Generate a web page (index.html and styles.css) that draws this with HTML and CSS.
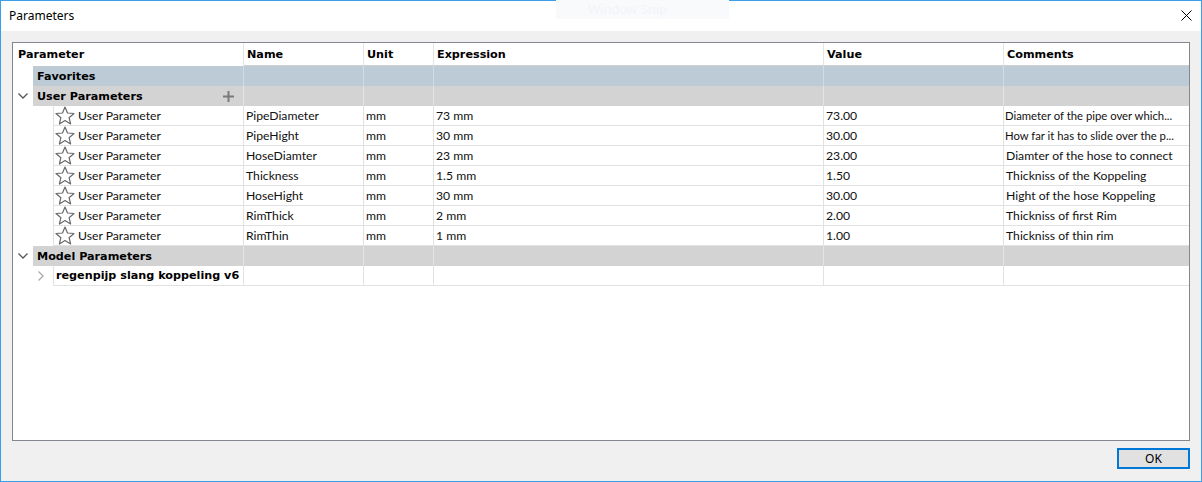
FILE: index.html
```html
<!DOCTYPE html>
<html>
<head>
<meta charset="utf-8">
<link rel="stylesheet" href="styles.css">
</head>
<body>
<div class="window">
  <div class="titlebar">
    <span class="title">Parameters</span>
    <span class="snip">Window Snip</span>
    <svg class="close" width="11" height="11" viewBox="0 0 11 11"><path d="M0.5 0.5 L10.5 10.5 M10.5 0.5 L0.5 10.5" stroke="#000" stroke-width="1" fill="none"/></svg>
  </div>
  <div class="content">
    <div class="grid">
      <div class="row head">
        <div class="c h first">Parameter</div>
        <div class="c h">Name</div>
        <div class="c h">Unit</div>
        <div class="c h">Expression</div>
        <div class="c h">Value</div>
        <div class="c h last">Comments</div>
      </div>

      <div class="row fav">
        <div class="c first"><span class="ind1"></span><span class="glabel">Favorites</span></div>
        <div class="c"></div><div class="c"></div><div class="c"></div><div class="c"></div><div class="c last"></div>
      </div>

      <div class="row grp">
        <div class="c first"><span class="ind1"><svg width="10" height="6" viewBox="0 0 10 6"><path d="M0.5 0.5 L5 5 L9.5 0.5" stroke="#555" stroke-width="1.3" fill="none"/></svg></span><span class="glabel">User Parameters<svg class="plus" width="11" height="11" viewBox="0 0 11 11"><path d="M5.5 0 V11 M0 5.5 H11" stroke="#7a7a7a" stroke-width="2"/></svg></span></div>
        <div class="c"></div><div class="c"></div><div class="c"></div><div class="c"></div><div class="c last"></div>
      </div>

      <div class="row data">
        <div class="c first"><span class="ind2"></span><span class="dlabel"><svg class="star" width="20" height="19" viewBox="0 0 20 19"><path d="M10 1 L12.5 7 L19 7.5 L14.1 11.7 L15.6 18 L10 14.6 L4.4 18 L5.9 11.7 L1 7.5 L7.5 7 Z" stroke="#6a6a6a" stroke-width="1.2" fill="none" stroke-linejoin="round"/></svg>User Parameter</span></div>
        <div class="c">PipeDiameter</div><div class="c">mm</div><div class="c">73 mm</div><div class="c">73.00</div><div class="c last small">Diameter of the pipe over which...</div>
      </div>
      <div class="row data">
        <div class="c first"><span class="ind2"></span><span class="dlabel"><svg class="star" width="20" height="19" viewBox="0 0 20 19"><path d="M10 1 L12.5 7 L19 7.5 L14.1 11.7 L15.6 18 L10 14.6 L4.4 18 L5.9 11.7 L1 7.5 L7.5 7 Z" stroke="#6a6a6a" stroke-width="1.2" fill="none" stroke-linejoin="round"/></svg>User Parameter</span></div>
        <div class="c">PipeHight</div><div class="c">mm</div><div class="c">30 mm</div><div class="c">30.00</div><div class="c last small">How far it has to slide over the p...</div>
      </div>
      <div class="row data">
        <div class="c first"><span class="ind2"></span><span class="dlabel"><svg class="star" width="20" height="19" viewBox="0 0 20 19"><path d="M10 1 L12.5 7 L19 7.5 L14.1 11.7 L15.6 18 L10 14.6 L4.4 18 L5.9 11.7 L1 7.5 L7.5 7 Z" stroke="#6a6a6a" stroke-width="1.2" fill="none" stroke-linejoin="round"/></svg>User Parameter</span></div>
        <div class="c">HoseDiamter</div><div class="c">mm</div><div class="c">23 mm</div><div class="c">23.00</div><div class="c last">Diamter of the hose to connect</div>
      </div>
      <div class="row data">
        <div class="c first"><span class="ind2"></span><span class="dlabel"><svg class="star" width="20" height="19" viewBox="0 0 20 19"><path d="M10 1 L12.5 7 L19 7.5 L14.1 11.7 L15.6 18 L10 14.6 L4.4 18 L5.9 11.7 L1 7.5 L7.5 7 Z" stroke="#6a6a6a" stroke-width="1.2" fill="none" stroke-linejoin="round"/></svg>User Parameter</span></div>
        <div class="c">Thickness</div><div class="c">mm</div><div class="c">1.5 mm</div><div class="c">1.50</div><div class="c last">Thickniss of the Koppeling</div>
      </div>
      <div class="row data">
        <div class="c first"><span class="ind2"></span><span class="dlabel"><svg class="star" width="20" height="19" viewBox="0 0 20 19"><path d="M10 1 L12.5 7 L19 7.5 L14.1 11.7 L15.6 18 L10 14.6 L4.4 18 L5.9 11.7 L1 7.5 L7.5 7 Z" stroke="#6a6a6a" stroke-width="1.2" fill="none" stroke-linejoin="round"/></svg>User Parameter</span></div>
        <div class="c">HoseHight</div><div class="c">mm</div><div class="c">30 mm</div><div class="c">30.00</div><div class="c last">Hight of the hose Koppeling</div>
      </div>
      <div class="row data">
        <div class="c first"><span class="ind2"></span><span class="dlabel"><svg class="star" width="20" height="19" viewBox="0 0 20 19"><path d="M10 1 L12.5 7 L19 7.5 L14.1 11.7 L15.6 18 L10 14.6 L4.4 18 L5.9 11.7 L1 7.5 L7.5 7 Z" stroke="#6a6a6a" stroke-width="1.2" fill="none" stroke-linejoin="round"/></svg>User Parameter</span></div>
        <div class="c">RimThick</div><div class="c">mm</div><div class="c">2 mm</div><div class="c">2.00</div><div class="c last">Thickniss of first Rim</div>
      </div>
      <div class="row data">
        <div class="c first"><span class="ind2"></span><span class="dlabel"><svg class="star" width="20" height="19" viewBox="0 0 20 19"><path d="M10 1 L12.5 7 L19 7.5 L14.1 11.7 L15.6 18 L10 14.6 L4.4 18 L5.9 11.7 L1 7.5 L7.5 7 Z" stroke="#6a6a6a" stroke-width="1.2" fill="none" stroke-linejoin="round"/></svg>User Parameter</span></div>
        <div class="c">RimThin</div><div class="c">mm</div><div class="c">1 mm</div><div class="c">1.00</div><div class="c last">Thickniss of thin rim</div>
      </div>

      <div class="row grp">
        <div class="c first"><span class="ind1"><svg width="10" height="6" viewBox="0 0 10 6"><path d="M0.5 0.5 L5 5 L9.5 0.5" stroke="#555" stroke-width="1.3" fill="none"/></svg></span><span class="glabel">Model Parameters</span></div>
        <div class="c"></div><div class="c"></div><div class="c"></div><div class="c"></div><div class="c last"></div>
      </div>

      <div class="row data">
        <div class="c first"><span class="ind2 arrow"><svg width="6" height="10" viewBox="0 0 6 10"><path d="M0.5 0.5 L5 5 L0.5 9.5" stroke="#aaa" stroke-width="1.3" fill="none"/></svg></span><span class="dlabel bold">regenpijp slang koppeling v6</span></div>
        <div class="c"></div><div class="c"></div><div class="c"></div><div class="c"></div><div class="c last"></div>
      </div>
    </div>
    <div class="buttons">
      <button class="ok">OK</button>
    </div>
  </div>
</div>
</body>
</html>
```

FILE: styles.css
```css
* { box-sizing: border-box; }
html, body { margin: 0; padding: 0; }
body {
  width: 1202px;
  height: 482px;
  overflow: hidden;
  font-family: "Noto Sans", "Open Sans", sans-serif;
  color: #000;
}
.window {
  width: 1202px;
  height: 482px;
  border: 1px solid #3a9fe8;
  display: flex;
  flex-direction: column;
  background: #f0f0f0;
}
.titlebar {
  position: relative;
  height: 30px;
  background: #fff;
  display: flex;
  align-items: center;
  padding-left: 8px;
  flex: none;
}
.title {
  font-size: 12px;
  color: #000;
  margin-top: -1px;
}
.snip {
  position: absolute;
  left: 555px;
  top: -1px;
  width: 173px;
  height: 19px;
  background: #f9fafc;
  color: #f2f4f8;
  font-size: 13px;
  line-height: 19px;
  padding-left: 32px;
}
.close {
  position: absolute;
  left: 1180px;
  top: 9px;
}
.content {
  flex: 1;
  padding: 11px 11px 0 11px;
  display: flex;
  flex-direction: column;
}
.grid {
  height: 399px;
  border: 1px solid #828790;
  background: #fff;
  display: flex;
  flex-direction: column;
}
.row {
  display: grid;
  grid-template-columns: 231px 120px 70px 390px 180px 1fr;
  height: 20px;
  flex: none;
}
.c {
  border-right: 1px solid #e2e2e2;
  border-bottom: 1px solid #e2e2e2;
  font-family: "Lato", "Noto Sans", sans-serif;
  font-size: 12.2px;
  line-height: 19px;
  padding-left: 2px;
  white-space: nowrap;
  overflow: hidden;
  color: #111;
}
.c.last { border-right: none; }
.c.small { font-size: 11.3px; padding-left: 1px; }
.row.head { height: 23px; }
.c.h {
  font-family: "DejaVu Sans", sans-serif;
  font-weight: bold;
  font-size: 11.2px;
  line-height: 23px;
  padding-left: 3px;
  border-bottom: 1px solid #d0d0d0;
  border-right-color: #e6e6e6;
  color: #000;
}
.c.h.first { padding-left: 5px; }
.c.first {
  display: flex;
  padding-left: 0;
  border-bottom: none;
}
.ind1 {
  width: 20px;
  flex: none;
  display: flex;
  align-items: center;
  justify-content: center;
  background: #fff;
}
.ind1 svg { margin-top: -1px; }
.ind2 {
  width: 40px;
  flex: none;
  background: #fff;
}
.ind2.arrow {
  display: flex;
  align-items: center;
  justify-content: flex-end;
  padding-right: 9px;
}
.glabel {
  flex: 1;
  display: flex;
  align-items: center;
  justify-content: space-between;
  font-family: "DejaVu Sans", sans-serif;
  font-weight: bold;
  font-size: 11.2px;
  padding-left: 4px;
  padding-right: 9px;
  color: #000;
}
.dlabel {
  flex: 1;
  display: flex;
  align-items: center;
  gap: 3px;
  border-left: 1px solid #e2e2e2;
  border-bottom: 1px solid #e2e2e2;
  padding-left: 1px;
}
.dlabel.bold {
  font-family: "DejaVu Sans", sans-serif;
  font-weight: bold;
  font-size: 11.2px;
  padding-left: 2px;
  color: #000;
}
.star { flex: none; }
.fav .c { background: #bccbd6; border-bottom-color: #bccbd6; border-right-color: #d3dce3; }
.fav .c.first { background: #fff; }
.fav .glabel { background: #bccbd6; }
.grp .c { background: #d3d3d3; border-bottom-color: #d3d3d3; border-right-color: #e4e4e4; }
.grp .c.first { background: #fff; }
.grp .glabel { background: #d3d3d3; }
.buttons {
  display: flex;
  justify-content: flex-end;
  padding-top: 7px;
}
.ok {
  width: 73px;
  height: 21px;
  border: 2px solid #0078d7;
  background: #e1e1e1;
  font-family: "Noto Sans", sans-serif;
  font-size: 12px;
  line-height: 15px;
  padding: 0;
  color: #000;
}
```
